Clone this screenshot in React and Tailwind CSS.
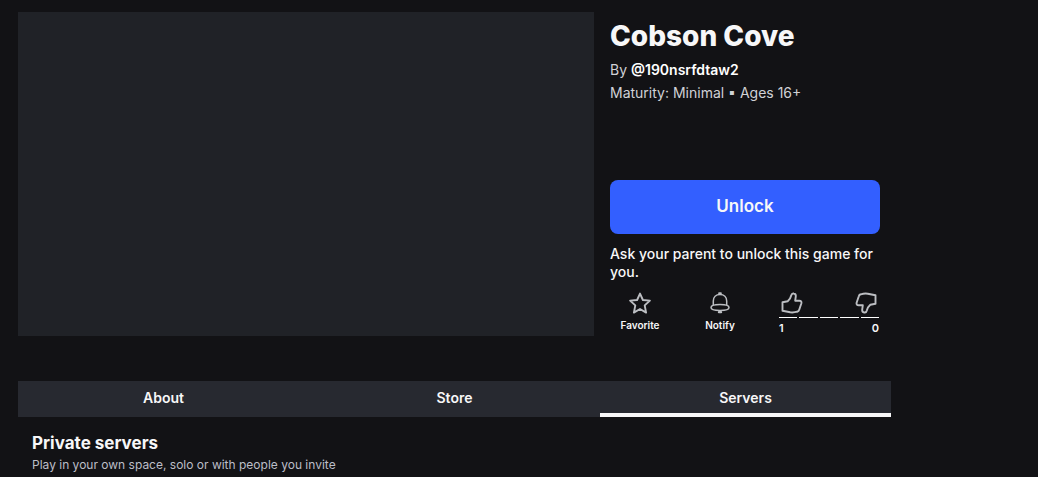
const TABS = ['About', 'Store', 'Servers']

function StarIcon() {
  return (
    <svg className="h-7 w-7" viewBox="0 0 28 28" fill="none" stroke="#bcbec2" strokeWidth="1.9" strokeLinejoin="round" aria-hidden="true">
      <path d="M14 4.600l2.900 6.400 7 .6-5.200 4.800 1.400 7.200-6.100-3.600-6.100 3.600 1.400-7.200-5.200-4.800 7-.6z" />
    </svg>
  )
}

function BellIcon() {
  return (
    <svg className="h-7 w-7" viewBox="0 0 28 28" fill="none" stroke="#bcbec2" strokeWidth="1.5" strokeLinejoin="round" aria-hidden="true">
      <path d="M7.3 16.300v-4.300c0-4 2.700-6.500 6.700-6.500s6.700 2.500 6.700 6.500v4.300" />
      <path d="M14 15.600c5 0 9 1.100 9 3s-4 3-9 3-9-1.100-9-3 4-3 9-3z" />
      <path d="M13.200 4.300h1.600M12.900 23.200h2.200" strokeWidth="2.200" strokeLinecap="round" />
    </svg>
  )
}

function ThumbIcon({ down }) {
  return (
    <svg className={down ? 'h-7 w-7 rotate-180' : 'h-7 w-7'} viewBox="0 0 28 28" fill="none" stroke="#bcbec2" strokeWidth="1.9" strokeLinejoin="round" aria-hidden="true">
      <path d="M3.500 13.200l5.200-.9c1.900-1.600 3.100-3.600 3.600-6 .4-1.500 1.300-2.100 2.500-1.800 1.500.3 2.200 1.300 2 2.900l-.6 4.300h4.200c1.500 0 2.400 1 2 2.500l-2.200 6.600c-.3 1.100-1 1.700-2 1.900-2.300.7-4.500.9-7 .6L3.500 21.800z" />
    </svg>
  )
}

function VoteButtons() {
  return (
    <div className="w-[100px]">
      <div className="flex justify-between">
        <button type="button" aria-label="Like">
          <ThumbIcon />
        </button>
        <button type="button" aria-label="Dislike">
          <ThumbIcon down />
        </button>
      </div>
      <div className="flex gap-0.5">
        {[0, 1, 2, 3, 4].map((n) => (
          <span key={n} className="h-px flex-1 bg-white" />
        ))}
      </div>
      <div className="mt-0.5 flex justify-between text-[11px] leading-4 font-semibold">
        <span>1</span>
        <span>0</span>
      </div>
    </div>
  )
}

function GameInfo() {
  return (
    <div className="flex w-[270px] shrink-0 flex-col">
      <h1 className="mt-1.5 text-[28px] leading-9 font-extrabold">Cobson Cove</h1>
      <p className="mt-1.5 text-sm leading-5 text-[#d0d1d6]">
        By <a href="#creator" className="font-semibold text-white">@190nsrfdtaw2</a>
      </p>
      <p className="mt-[3px] text-sm leading-5 text-[#d0d1d6]">Maturity: Minimal ▪ Ages 16+</p>
      <div className="mt-auto">
        <button type="button" className="h-[54px] w-full rounded-lg bg-[#335fff] text-[17px] font-semibold text-[#f7f7f8]">
          Unlock
        </button>
        <p className="mt-[11px] text-sm leading-[18px] font-medium">Ask your parent to unlock this game for you.</p>
        <div className="mt-2 flex pr-px">
          <button type="button" className="flex w-[60px] flex-col items-center text-[10px] leading-4 font-semibold">
            <StarIcon />
            Favorite
          </button>
          <button type="button" className="ml-5 flex w-[60px] flex-col items-center text-[10px] leading-4 font-semibold">
            <BellIcon />
            Notify
          </button>
          <div className="ml-auto">
            <VoteButtons />
          </div>
        </div>
      </div>
    </div>
  )
}

export default function App() {
  return (
    <div className="min-h-screen bg-[#121215] px-[18px] pt-3 font-[Inter,sans-serif] text-[#f7f7f8]">
      <main className="max-w-[873px]">
        <section className="flex gap-4 pr-[11px]">
          <div className="aspect-video min-w-0 flex-1 bg-[#202227]" />
          <GameInfo />
        </section>

        <nav className="mt-[45px] grid grid-cols-3 bg-[#272930]">
          {TABS.map((tab) => (
            <a
              key={tab}
              href={'#' + tab.toLowerCase()}
              className={
                'h-9 border-b-4 text-center text-sm leading-[34px] font-semibold ' +
                (tab === 'Servers' ? 'border-[#f7f7f8]' : 'border-transparent')
              }
            >
              {tab}
            </a>
          ))}
        </nav>

        <section className="px-3.5 pt-3">
          <h2 className="text-[17px] leading-7 font-bold">Private servers</h2>
          <p className="text-xs leading-4 text-[#bcbec8]">Play in your own space, solo or with people you invite</p>
        </section>
      </main>
    </div>
  )
}
